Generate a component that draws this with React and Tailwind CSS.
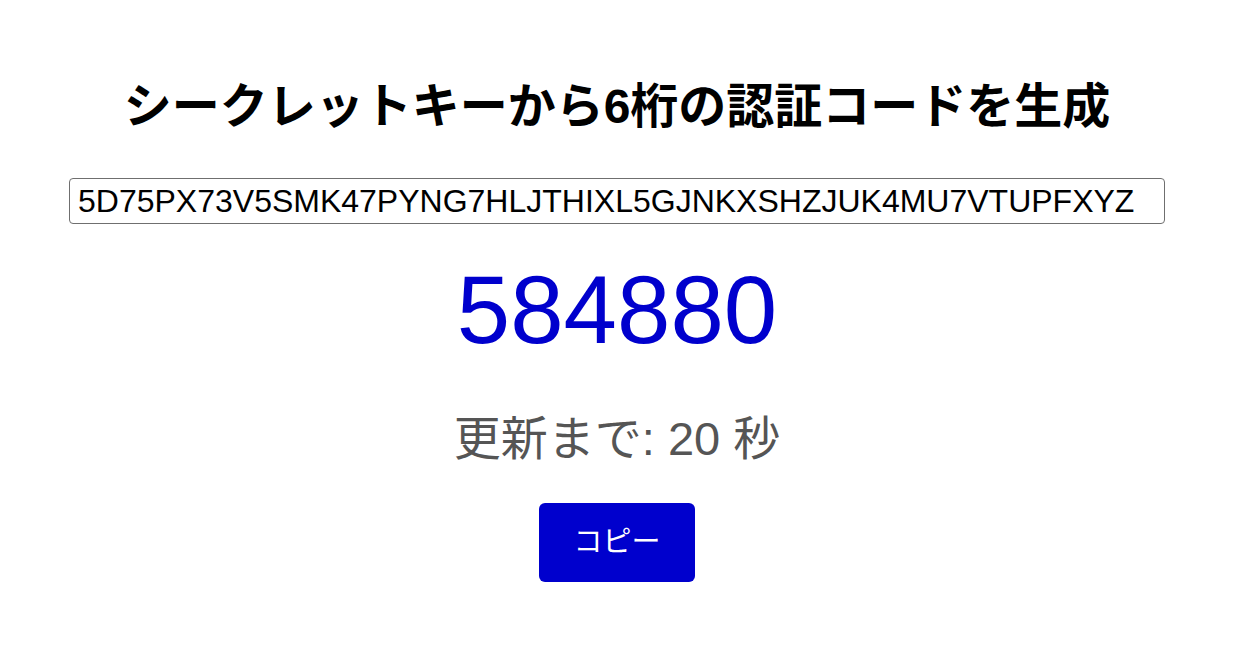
import React, { useState } from "react";

const App = () => {
  const [secret, setSecret] = useState("5D75PX73V5SMK47PYNG7HLJTHIXL5GJNKXSHZJUK4MU7VTUPFXYZ");
  const code = "584880";
  const remaining = 20;

  return (
    <div className="min-h-[670px] bg-white pr-2 pt-[83px] font-['Liberation_Sans','Noto_Sans_CJK_JP',sans-serif]">
      <div className="flex flex-col items-center">
        <h1 className="text-[48px] leading-[48px] font-bold text-black">
          シークレットキーから6桁の認証コードを生成
        </h1>
        <input
          type="text"
          value={secret}
          onChange={(e) => setSecret(e.target.value)}
          className="mt-[47px] h-[46px] w-[1096px] rounded-[4px] border-[1.5px] border-[#6f6f6f] px-[8px] text-[32px] text-black outline-none"
        />
        <div className="mt-[38px] text-[96px] leading-[96px] text-[#0000cd]">{code}</div>
        <div className="mt-[57px] text-[47px] leading-[47px] text-[#555555]">
          更新まで: {remaining} 秒
        </div>
        <button className="mt-[41px] flex h-[79px] w-[156px] items-center justify-center rounded-[6px] bg-[#0000cd] text-[29px] text-white">
          コピー
        </button>
      </div>
    </div>
  );
};

export default App;
